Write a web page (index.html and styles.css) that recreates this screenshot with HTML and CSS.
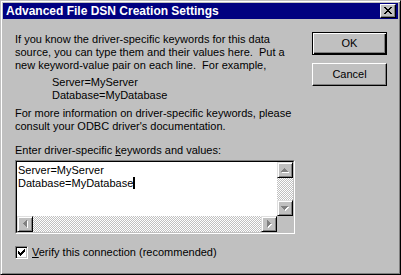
FILE: index.html
```html
<!DOCTYPE html>
<html>
<head>
<meta charset="utf-8">
<link rel="stylesheet" href="styles.css">
</head>
<body>
<div class="window">
  <div class="titlebar">
    <span class="title">Advanced File DSN Creation Settings</span>
    <div class="close">
      <svg width="14" height="12" viewBox="0 0 14 12" shape-rendering="crispEdges"><path fill="#000" d="M3,2h2v1h-2zM9,2h2v1h-2zM4,3h2v1h-2zM8,3h2v1h-2zM5,4h4v1h-4zM6,5h2v1h-2zM5,6h4v1h-4zM4,7h2v1h-2zM8,7h2v1h-2zM3,8h2v1h-2zM9,8h2v1h-2z"/></svg>
    </div>
  </div>
  <div class="content">
    <div class="main">
      <p class="intro">If you know the driver-specific keywords for this data<br>source, you can type them and their values here.&nbsp; Put a<br>new keyword-value pair on each line.&nbsp; For example,</p>
      <p class="example">Server=MyServer<br>Database=MyDatabase</p>
      <p class="more">For more information on driver-specific keywords, please<br>consult your ODBC driver's documentation.</p>
      <div class="label">Enter driver-specific <u>k</u>eywords and values:</div>
      <div class="editbox">
        <div class="editbox-inner">
          <div class="edit-text">Server=MyServer<br>Database=MyDatabase<span class="caret"></span></div>
          <div class="vscroll">
            <div class="sbtn"><svg width="14" height="14" viewBox="0 0 14 14" shape-rendering="crispEdges"><path fill="#fff" d="M7,6h1v1h-1zM6,7h3v1h-3zM5,8h5v1h-5zM4,9h7v1h-7z"/><path fill="#808080" d="M6,5h1v1h-1zM5,6h3v1h-3zM4,7h5v1h-5zM3,8h7v1h-7z"/></svg></div>
            <div class="track"></div>
            <div class="sbtn"><svg width="14" height="14" viewBox="0 0 14 14" shape-rendering="crispEdges"><path fill="#fff" d="M4,6h7v1h-7zM5,7h5v1h-5zM6,8h3v1h-3zM7,9h1v1h-1z"/><path fill="#808080" d="M3,5h7v1h-7zM4,6h5v1h-5zM5,7h3v1h-3zM6,8h1v1h-1z"/></svg></div>
          </div>
          <div class="hscroll">
            <div class="sbtn"><svg width="14" height="14" viewBox="0 0 14 14" shape-rendering="crispEdges"><path fill="#fff" d="M6,7h1v1h-1zM7,6h1v3h-1zM8,5h1v5h-1zM9,4h1v7h-1z"/><path fill="#808080" d="M5,6h1v1h-1zM6,5h1v3h-1zM7,4h1v5h-1zM8,3h1v7h-1z"/></svg></div>
            <div class="track"></div>
            <div class="sbtn"><svg width="14" height="14" viewBox="0 0 14 14" shape-rendering="crispEdges"><path fill="#fff" d="M6,4h1v7h-1zM7,5h1v5h-1zM8,6h1v3h-1zM9,7h1v1h-1z"/><path fill="#808080" d="M5,3h1v7h-1zM6,4h1v5h-1zM7,5h1v3h-1zM8,6h1v1h-1z"/></svg></div>
          </div>
          <div class="corner"></div>
        </div>
      </div>
      <div class="check">
        <span class="checkbox"><svg width="11" height="11" viewBox="0 0 11 11" shape-rendering="crispEdges"><path fill="#000" d="M2,4h1v3h-1zM3,5h1v3h-1zM4,6h1v3h-1zM5,5h1v3h-1zM6,4h1v3h-1zM7,3h1v3h-1zM8,2h1v3h-1z"/></svg></span>
        <span class="check-label"><u>V</u>erify this connection (recommended)</span>
      </div>
    </div>
    <div class="buttons">
      <div class="btn btn-default">OK</div>
      <div class="btn">Cancel</div>
    </div>
  </div>
</div>
</body>
</html>
```

FILE: styles.css
```css
html, body {
  margin: 0;
  padding: 0;
  background: #c0c0c0;
}

body {
  font-family: "Liberation Sans", Arial, sans-serif;
  font-size: 11px;
  line-height: 13px;
  color: #000;
}

.window {
  width: 401px;
  height: 275px;
  box-sizing: border-box;
  background: #c0c0c0;
  border: 1px solid;
  border-color: #c0c0c0 #000 #000 #c0c0c0;
  box-shadow: inset 1px 1px #fff, inset -1px -1px #808080;
  padding: 2px;
  display: flex;
  flex-direction: column;
}

.titlebar {
  height: 16px;
  background: #000080;
  display: flex;
  align-items: center;
  justify-content: space-between;
  padding: 0 2px 0 3px;
}

.title {
  color: #fff;
  font-weight: bold;
  font-size: 12px;
  line-height: 14px;
}

.close {
  width: 16px;
  height: 14px;
  box-sizing: border-box;
  background: #c0c0c0;
  border: 1px solid;
  border-color: #fff #000 #000 #fff;
  box-shadow: inset -1px -1px #808080;
  display: flex;
}

.close svg {
  display: block;
}

.content {
  display: flex;
  gap: 17px;
  padding: 13px 0 0 12px;
}

.main {
  width: 280px;
  display: flex;
  flex-direction: column;
}

p {
  margin: 0;
  white-space: nowrap;
}

.intro {
  margin-top: 1px;
}

.example {
  margin-top: 4px;
  padding-left: 37px;
}

.more {
  margin-top: 5px;
}

.label {
  margin-top: 11px;
  white-space: nowrap;
}

.editbox {
  margin-top: 3px;
  height: 74px;
  box-sizing: border-box;
  border: 1px solid;
  border-color: #808080 #fff #fff #808080;
}

.editbox-inner {
  height: 100%;
  box-sizing: border-box;
  border: 1px solid;
  border-color: #000 #c0c0c0 #c0c0c0 #000;
  display: grid;
  grid-template-columns: 1fr 16px;
  grid-template-rows: 1fr 16px;
}

.edit-text {
  background: #fff;
  padding: 2px 0 0 1px;
  white-space: nowrap;
  overflow: hidden;
}

.caret {
  display: inline-block;
  width: 2px;
  height: 12px;
  background: #000;
  vertical-align: -2px;
}

.vscroll {
  display: flex;
  flex-direction: column;
}

.hscroll {
  display: flex;
}

.track {
  flex: 1;
  background-image: repeating-conic-gradient(#fff 0% 25%, #c0c0c0 0% 50%);
  background-size: 2px 2px;
}

.sbtn {
  width: 16px;
  height: 16px;
  flex: none;
  box-sizing: border-box;
  background: #c0c0c0;
  border: 1px solid;
  border-color: #dfdfdf #000 #000 #dfdfdf;
  box-shadow: inset 1px 1px #fff, inset -1px -1px #808080;
}

.sbtn svg {
  display: block;
}

.corner {
  background: #c0c0c0;
}

.check {
  margin-top: 12px;
  display: flex;
  align-items: center;
  gap: 4px;
  white-space: nowrap;
}

.checkbox {
  width: 13px;
  height: 13px;
  box-sizing: border-box;
  background: #fff;
  border: 1px solid;
  border-color: #808080 #fff #fff #808080;
  box-shadow: inset 1px 1px #000, inset -1px -1px #c0c0c0;
  flex: none;
}

.checkbox svg {
  display: block;
}

.buttons {
  display: flex;
  flex-direction: column;
  gap: 8px;
}

.btn {
  width: 75px;
  height: 23px;
  box-sizing: border-box;
  background: #c0c0c0;
  border: 1px solid;
  border-color: #fff #000 #000 #fff;
  box-shadow: inset -1px -1px #808080;
  display: flex;
  align-items: center;
  justify-content: center;
}

.btn-default {
  border-color: #000;
  box-shadow: inset 1px 1px #fff, inset -1px -1px #000, inset -2px -2px #808080;
}
```
